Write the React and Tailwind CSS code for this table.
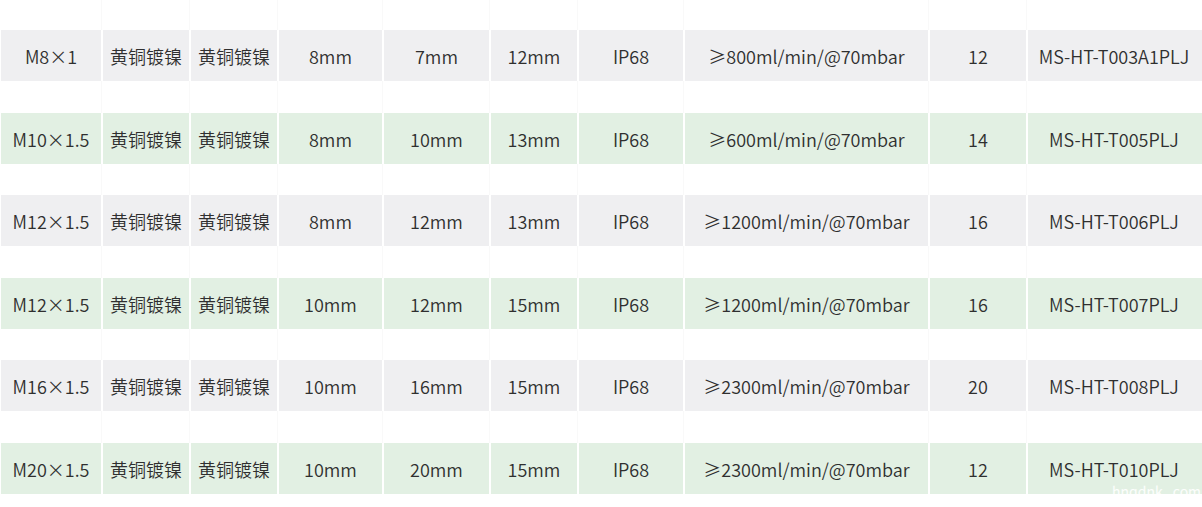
import React from "react";

const cols = [
  "w-[100px]",
  "w-[88px]",
  "w-[88px]",
  "w-[105px]",
  "w-[107px]",
  "w-[88px]",
  "w-[106px]",
  "w-[245px]",
  "w-[98px]",
  "w-[174px]",
];

const rows = [
  ["M8×1", "黄铜镀镍", "黄铜镀镍", "8mm", "7mm", "12mm", "IP68", "≥800ml/min/@70mbar", "12", "MS-HT-T003A1PLJ"],
  ["M10×1.5", "黄铜镀镍", "黄铜镀镍", "8mm", "10mm", "13mm", "IP68", "≥600ml/min/@70mbar", "14", "MS-HT-T005PLJ"],
  ["M12×1.5", "黄铜镀镍", "黄铜镀镍", "8mm", "12mm", "13mm", "IP68", "≥1200ml/min/@70mbar", "16", "MS-HT-T006PLJ"],
  ["M12×1.5", "黄铜镀镍", "黄铜镀镍", "10mm", "12mm", "15mm", "IP68", "≥1200ml/min/@70mbar", "16", "MS-HT-T007PLJ"],
  ["M16×1.5", "黄铜镀镍", "黄铜镀镍", "10mm", "16mm", "15mm", "IP68", "≥2300ml/min/@70mbar", "20", "MS-HT-T008PLJ"],
  ["M20×1.5", "黄铜镀镍", "黄铜镀镍", "10mm", "20mm", "15mm", "IP68", "≥2300ml/min/@70mbar", "12", "MS-HT-T010PLJ"],
];

function Spacer({ h }) {
  return (
    <div className={`flex ${h}`}>
      {cols.map((w, i) => (
        <div
          key={i}
          className={`${w} h-full ${i > 0 ? "border-l border-[#f9f9f9]" : ""}`}
        />
      ))}
    </div>
  );
}

export default function App() {
  return (
    <div
      className="relative w-[1202px] h-[507px] bg-white overflow-hidden pl-[1px] text-[#2f2f2f]"
      style={{ fontFamily: '"Noto Sans CJK SC", "Noto Sans", sans-serif' }}
    >
      <Spacer h="h-[30px]" />
      {rows.map((r, ri) => (
        <React.Fragment key={ri}>
          <div
            className={`flex h-[51px] ${ri % 2 === 0 ? "bg-[#efeff1]" : "bg-[#e2f0e3]"}`}
          >
            {r.map((t, i) => (
              <div
                key={i}
                className={`${cols[i]} flex items-center justify-center pt-[2px] text-[18px] font-[350] whitespace-nowrap ${
                  i > 0 ? "border-l-2 border-white" : ""
                }`}
              >
                {t}
              </div>
            ))}
          </div>
          {ri < rows.length - 1 && <Spacer h="h-[31.6px]" />}
        </React.Fragment>
      ))}
      <div className="absolute left-[1112px] top-[482px] text-[14px] leading-[18px] text-white/90 whitespace-nowrap">
        hnqdnk . com
      </div>
    </div>
  );
}
